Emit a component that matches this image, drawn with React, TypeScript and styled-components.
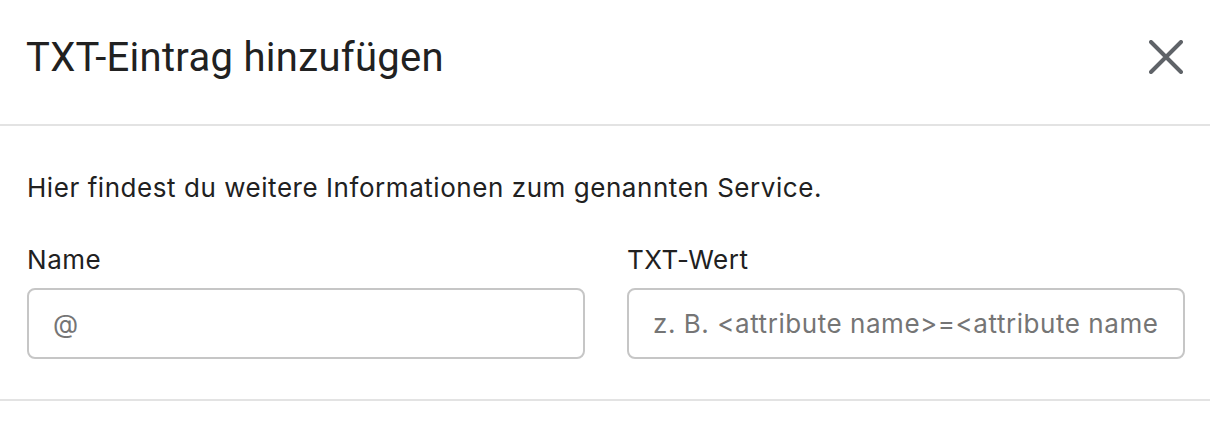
import React, {FC} from 'react';
import styled, {createGlobalStyle} from 'styled-components';

const GlobalStyle = createGlobalStyle`
    html, body {
        margin: 0;
        padding: 0;
        background: #ffffff;
    }
    body {
        font-family: Inter, Roboto, "Noto Sans", sans-serif;
        color: #212121;
        -webkit-font-smoothing: antialiased;
    }
`;

/** Иконка закрытия */
const CloseIcon: FC = () => (
    <svg width="34" height="34" viewBox="0 0 34 34" fill="none">
        <path d="M2 2L32 32M32 2L2 32" stroke="#5f6368" strokeWidth="4" strokeLinecap="round" />
    </svg>
);

interface IFieldFC {
    label: string;
    placeholder: string;
}

const Field: FC<IFieldFC> = ({label, placeholder}) => (
    <FieldContainer>
        <Label>{label}</Label>
        <Input placeholder={placeholder} />
    </FieldContainer>
);

export default function App() {
    return (
        <>
            <GlobalStyle />
            <Dialog>
                <Header>
                    <Title>TXT-Eintrag hinzufügen</Title>
                    <CloseButton aria-label="Schließen">
                        <CloseIcon />
                    </CloseButton>
                </Header>
                <Body>
                    <Description>Hier findest du weitere Informationen zum genannten Service.</Description>
                    <FieldsRow>
                        <Field label="Name" placeholder="@" />
                        <Field label="TXT-Wert" placeholder="z. B. <attribute name>=<attribute name>" />
                    </FieldsRow>
                </Body>
            </Dialog>
        </>
    );
}

const Dialog = styled.div`
    width: 1210px;
    display: flex;
    flex-direction: column;
`;

const Header = styled.div`
    display: flex;
    align-items: center;
    justify-content: space-between;
    height: 124px;
    padding: 0 26px 0 26px;
    border-bottom: 2px solid #e3e3e3;
`;

const Title = styled.h1`
    margin: 0;
    font-family: Roboto, "Noto Sans", sans-serif;
    font-size: 40px;
    font-weight: 400;
    letter-spacing: 0.3px;
    color: #212121;
    line-height: 48px;
    padding-bottom: 8px;
`;

const CloseButton = styled.button`
    display: flex;
    align-items: center;
    justify-content: center;
    padding: 0;
    margin-right: 1px;
    margin-bottom: 10px;
    border: none;
    background: none;
    cursor: pointer;
`;

const Body = styled.div`
    display: flex;
    flex-direction: column;
    padding: 46px 25px 40px 27px;
    border-bottom: 2px solid #e3e3e3;
`;

const Description = styled.p`
    margin: 0;
    font-size: 26px;
    letter-spacing: 0.55px;
    line-height: 32px;
    color: #212121;
`;

const FieldsRow = styled.div`
    display: grid;
    grid-template-columns: 1fr 1fr;
    column-gap: 42px;
    margin-top: 40px;
`;

const FieldContainer = styled.div`
    display: flex;
    flex-direction: column;
`;

const Label = styled.label`
    font-size: 26px;
    letter-spacing: 0.55px;
    line-height: 32px;
    color: #212121;
    margin-bottom: 12px;
`;

const Input = styled.input`
    box-sizing: border-box;
    height: 71px;
    width: 100%;
    padding: 0 24px;
    border: 2px solid #c6c6c6;
    border-radius: 8px;
    font-family: Inter, Roboto, "Noto Sans", sans-serif;
    font-size: 26px;
    letter-spacing: 0.55px;
    color: #212121;
    outline: none;

    &::placeholder {
        color: #757575;
    }
`;
